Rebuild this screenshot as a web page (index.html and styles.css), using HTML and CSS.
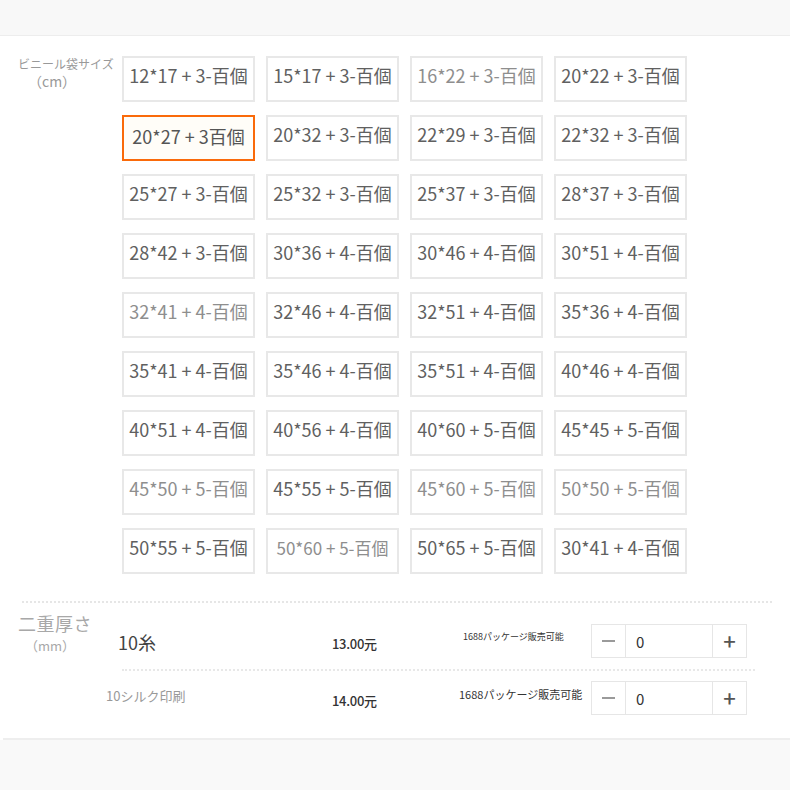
FILE: index.html
```html
<!DOCTYPE html>
<html lang="ja">
<head>
<meta charset="utf-8">
<title>サイズ選択</title>
<link rel="stylesheet" href="styles.css">
</head>
<body>
<div class="top-band"></div>
<div class="panel">
  <section class="sizes">
    <div class="size-label">
      <div>ビニール袋サイズ</div>
      <div class="unit">（cm）</div>
    </div>
    <div class="grid">
      <div class="cell">12*17 + 3-百個</div>
      <div class="cell">15*17 + 3-百個</div>
      <div class="cell dim">16*22 + 3-百個</div>
      <div class="cell">20*22 + 3-百個</div>
      <div class="cell selected">20*27 + 3百個</div>
      <div class="cell">20*32 + 3-百個</div>
      <div class="cell">22*29 + 3-百個</div>
      <div class="cell">22*32 + 3-百個</div>
      <div class="cell">25*27 + 3-百個</div>
      <div class="cell">25*32 + 3-百個</div>
      <div class="cell">25*37 + 3-百個</div>
      <div class="cell">28*37 + 3-百個</div>
      <div class="cell">28*42 + 3-百個</div>
      <div class="cell">30*36 + 4-百個</div>
      <div class="cell">30*46 + 4-百個</div>
      <div class="cell">30*51 + 4-百個</div>
      <div class="cell dim">32*41 + 4-百個</div>
      <div class="cell">32*46 + 4-百個</div>
      <div class="cell">32*51 + 4-百個</div>
      <div class="cell">35*36 + 4-百個</div>
      <div class="cell">35*41 + 4-百個</div>
      <div class="cell">35*46 + 4-百個</div>
      <div class="cell">35*51 + 4-百個</div>
      <div class="cell">40*46 + 4-百個</div>
      <div class="cell">40*51 + 4-百個</div>
      <div class="cell">40*56 + 4-百個</div>
      <div class="cell">40*60 + 5-百個</div>
      <div class="cell">45*45 + 5-百個</div>
      <div class="cell dim">45*50 + 5-百個</div>
      <div class="cell">45*55 + 5-百個</div>
      <div class="cell dim">45*60 + 5-百個</div>
      <div class="cell dim">50*50 + 5-百個</div>
      <div class="cell">50*55 + 5-百個</div>
      <div class="cell dim small">50*60 + 5-百個</div>
      <div class="cell">50*65 + 5-百個</div>
      <div class="cell">30*41 + 4-百個</div>
    </div>
  </section>

  <section class="thick">
    <div class="thick-label">
      <div class="tl-main">二重厚さ</div>
      <div class="tl-unit">（mm）</div>
    </div>
    <div class="rows">
      <div class="row first">
        <div class="name">10糸</div>
        <div class="price">13.00元</div>
        <div class="note tiny">1688パッケージ販売可能</div>
        <div class="stepper">
          <span class="btn minus"><i class="bar"></i></span>
          <span class="val">0</span>
          <span class="btn plus">+</span>
        </div>
      </div>
      <div class="row second">
        <div class="name light">10シルク印刷</div>
        <div class="price">14.00元</div>
        <div class="note">1688パッケージ販売可能</div>
        <div class="stepper">
          <span class="btn minus"><i class="bar"></i></span>
          <span class="val">0</span>
          <span class="btn plus">+</span>
        </div>
      </div>
    </div>
  </section>
</div>
<div class="bottom-band"></div>
</body>
</html>
```

FILE: styles.css
```css
* { box-sizing: border-box; }
html, body { margin: 0; padding: 0; }
body {
  width: 790px;
  height: 790px;
  background: #ffffff;
  font-family: "Noto Sans CJK JP", "Noto Sans", sans-serif;
  color: #555;
  overflow: hidden;
}
.top-band {
  height: 36px;
  background: #f8f8f8;
  border-bottom: 1px solid #ededed;
  margin-bottom: 1px;
}
.panel {
  height: 703px;
  border-bottom: 2px solid #eeeeee;
  margin-left: 3px;
}
.sizes {
  display: flex;
  padding-top: 19px;
}
.size-label {
  width: 119px;
  padding-left: 15px;
  font-size: 12px;
  line-height: 15px;
  color: #999;
  white-space: nowrap;
}
.size-label .unit {
  padding-left: 10px;
  margin-top: 1px;
  font-size: 14px;
  line-height: 18px;
}
.grid {
  display: grid;
  grid-template-columns: repeat(4, 133px);
  grid-auto-rows: 46px;
  column-gap: 11px;
  row-gap: 13px;
}
.cell {
  border: 2px solid #e8e8e8;
  display: flex;
  align-items: center;
  justify-content: center;
  padding-bottom: 8px;
  font-size: 18px;
  color: #606060;
  white-space: nowrap;
  background: #fff;
}
.cell.dim { color: #8e8e8e; }
.cell.small { font-size: 17px; }
.cell.selected {
  border-color: #fa6a0a;
  background: #fffdf8;
  color: #555;
  padding-bottom: 4px;
}
.thick {
  margin-top: 27px;
  margin-left: 19px;
  margin-right: 18px;
  border-top: 2px dotted #e6e6e6;
  display: flex;
}
.thick-label {
  width: 96px;
  margin-left: -4px;
  margin-right: 4px;
  padding-top: 9px;
  color: #a8a8a8;
}
.tl-main {
  font-size: 18px;
  line-height: 22px;
  letter-spacing: 0.5px;
  white-space: nowrap;
}
.tl-unit {
  font-size: 13px;
  line-height: 17px;
  margin-top: 3px;
  padding-left: 7px;
}
.rows { flex: 1; }
.row {
  display: flex;
  align-items: center;
}
.row.first {
  padding-top: 21px;
  padding-bottom: 11px;
  border-bottom: 2px dotted #e8e8e8;
  margin-left: 4px;
  margin-right: 17px;
}
.row.second {
  padding-top: 10px;
  margin-left: 4px;
}
.name {
  width: 214px;
  font-size: 18px;
  color: #444;
  padding-top: 2px;
}
.row.first .name { margin-left: -4px; }
.name.light {
  font-size: 13px;
  color: #999;
  margin-left: -16px;
  width: 226px;
  margin-bottom: 8px;
}
.price {
  width: 128px;
  font-size: 13px;
  color: #333;
  font-weight: 500;
  letter-spacing: -0.3px;
  padding-top: 4px;
}
.note {
  width: 132px;
  font-size: 11px;
  color: #333;
  margin-bottom: 9px;
  margin-left: -1px;
  white-space: nowrap;
}
.note.tiny {
  font-size: 9px;
  margin-left: 3px;
  width: 128px;
  margin-bottom: 10px;
}
.stepper {
  display: flex;
  width: 156px;
  height: 34px;
  border: 1px solid #e6e6e6;
}
.btn {
  width: 34px;
  display: flex;
  align-items: center;
  justify-content: center;
}
.minus {
  border-right: 1px solid #e6e6e6;
}
.bar {
  display: block;
  width: 13px;
  height: 2px;
  background: #9a9a9a;
}
.plus {
  color: #555;
  font-size: 22px;
  font-weight: 500;
  border-left: 1px solid #e6e6e6;
  padding-bottom: 2px;
}
.val {
  flex: 1;
  display: flex;
  align-items: center;
  padding-left: 10px;
  font-size: 15px;
  color: #333;
}
.bottom-band {
  height: 50px;
  background: #f9f9f9;
}
```
